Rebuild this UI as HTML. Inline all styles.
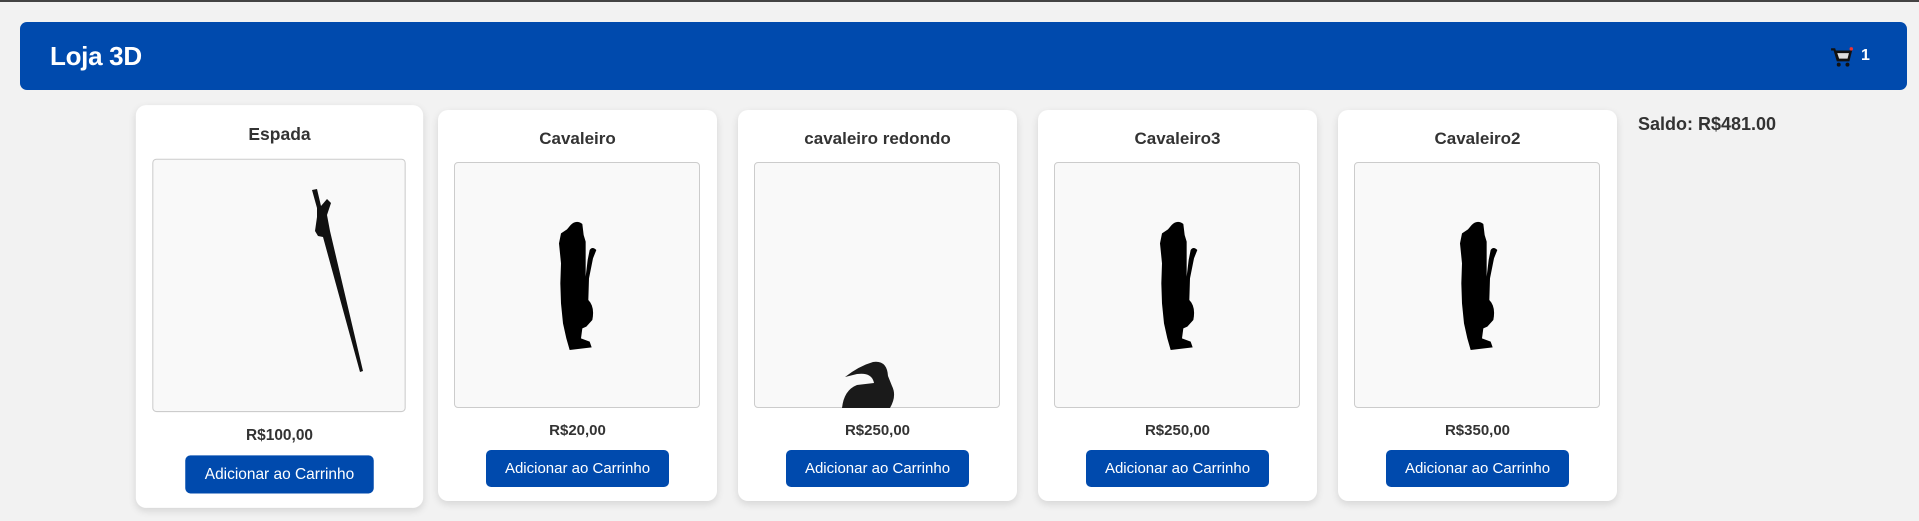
<!DOCTYPE html>
<html><head><meta charset="utf-8"><style>
*{margin:0;padding:0;box-sizing:border-box}
body{width:1919px;height:521px;background:#f2f2f2;position:relative;overflow:hidden;font-family:"Liberation Sans",sans-serif;color:#333}
.top{position:absolute;left:0;top:0;width:1919px;height:2px;background:#444}
.hdr{position:absolute;left:20px;top:22px;width:1887px;height:68px;background:#004aad;border-radius:7px}
.hdr h1{position:absolute;left:30px;top:19px;font-size:26px;color:#fff;font-weight:bold;letter-spacing:-0.3px}
.cnt{position:absolute;left:1861px;top:47px;color:#fff;font-weight:bold;font-size:16px}
.card{position:absolute;background:#fff;border-radius:10px;box-shadow:0 3px 8px rgba(0,0,0,0.12);width:279px;height:391px;top:110px}
.t{position:absolute;left:0;right:0;top:19px;text-align:center;font-weight:bold;font-size:17px}
.img{position:absolute;left:16px;top:52px;width:246px;height:246px;background:#f9f9f9;border:1px solid #ccc;border-radius:4px;overflow:hidden}
.p{position:absolute;left:0;right:0;top:312px;text-align:center;font-weight:bold;font-size:15px}
.b{position:absolute;left:48px;top:340px;width:183px;height:37px;background:#004aad;border-radius:5px;color:#fff;font-size:15px;text-align:center;line-height:37px}
.saldo{position:absolute;left:1638px;top:114px;font-weight:bold;font-size:18px}
</style></head><body>
<div class="top"></div>
<div class="hdr"><h1>Loja 3D</h1>
<svg style="position:absolute;left:1810px;top:24px" width="24" height="22" viewBox="0 0 22 20"><path d="M1 3h3l3 10h10l2-8H5" fill="none" stroke="#111" stroke-width="2"/><path d="M6 6h12l-1.5 6H8z" fill="#ddd" stroke="#111"/><circle cx="8" cy="17" r="1.8" fill="#111"/><circle cx="16" cy="17" r="1.8" fill="#111"/><circle cx="19.5" cy="2.5" r="1.6" fill="#e33"/></svg>
</div>
<div class="cnt">1</div>

<div class="card" style="left:140px;top:111px;transform:scale(1.03);">
<div class="t">Espada</div><div class="img"></div><div class="p">R$100,00</div><div class="b">Adicionar ao Carrinho</div></div>
<div class="card" style="left:438px"><div class="t">Cavaleiro</div><div class="img"></div><div class="p">R$20,00</div><div class="b">Adicionar ao Carrinho</div></div>
<div class="card" style="left:738px"><div class="t">cavaleiro redondo</div><div class="img"></div><div class="p">R$250,00</div><div class="b">Adicionar ao Carrinho</div></div>
<div class="card" style="left:1038px"><div class="t">Cavaleiro3</div><div class="img"></div><div class="p">R$250,00</div><div class="b">Adicionar ao Carrinho</div></div>
<div class="card" style="left:1338px"><div class="t">Cavaleiro2</div><div class="img"></div><div class="p">R$350,00</div><div class="b">Adicionar ao Carrinho</div></div>
<div class="saldo">Saldo: R$481.00</div>

<svg style="position:absolute;left:0;top:0" width="1919" height="521">
<defs><path id="k" d="M95,45 Q112,28 130,42 L134,75 L140,95 L140,200 L146,150 L152,120 Q160,108 172,120 L162,145 L150,205 L148,270 Q168,290 160,330 L142,350 L130,355 L126,385 L152,395 L158,412 L92,420 L82,385 L72,340 L66,280 L64,220 L66,160 L60,100 L66,70 L84,58 Z"/></defs>
<g transform="translate(539,210) scale(0.3333)"><use href="#k"/></g>
<g transform="translate(1140,210) scale(0.3333)"><use href="#k"/></g>
<g transform="translate(1440,210) scale(0.3333)"><use href="#k"/></g>
<path d="M312,190 L317,189 L321,206 L327,199 L331,203 L327,215 L330,231 L363,371 L360,372 L323,237 L318,236 L315,231 L317,217 L317,208 Z" fill="#111"/>
<path d="M845,377 Q859,366 873,362 Q887,360 888,376 L892,386 Q897,396 890,408 L842,408 Q844,390 857,385 L874,383 Q872,372 857,374 Z" fill="#1a1a1a"/>
</svg>
</body></html>
